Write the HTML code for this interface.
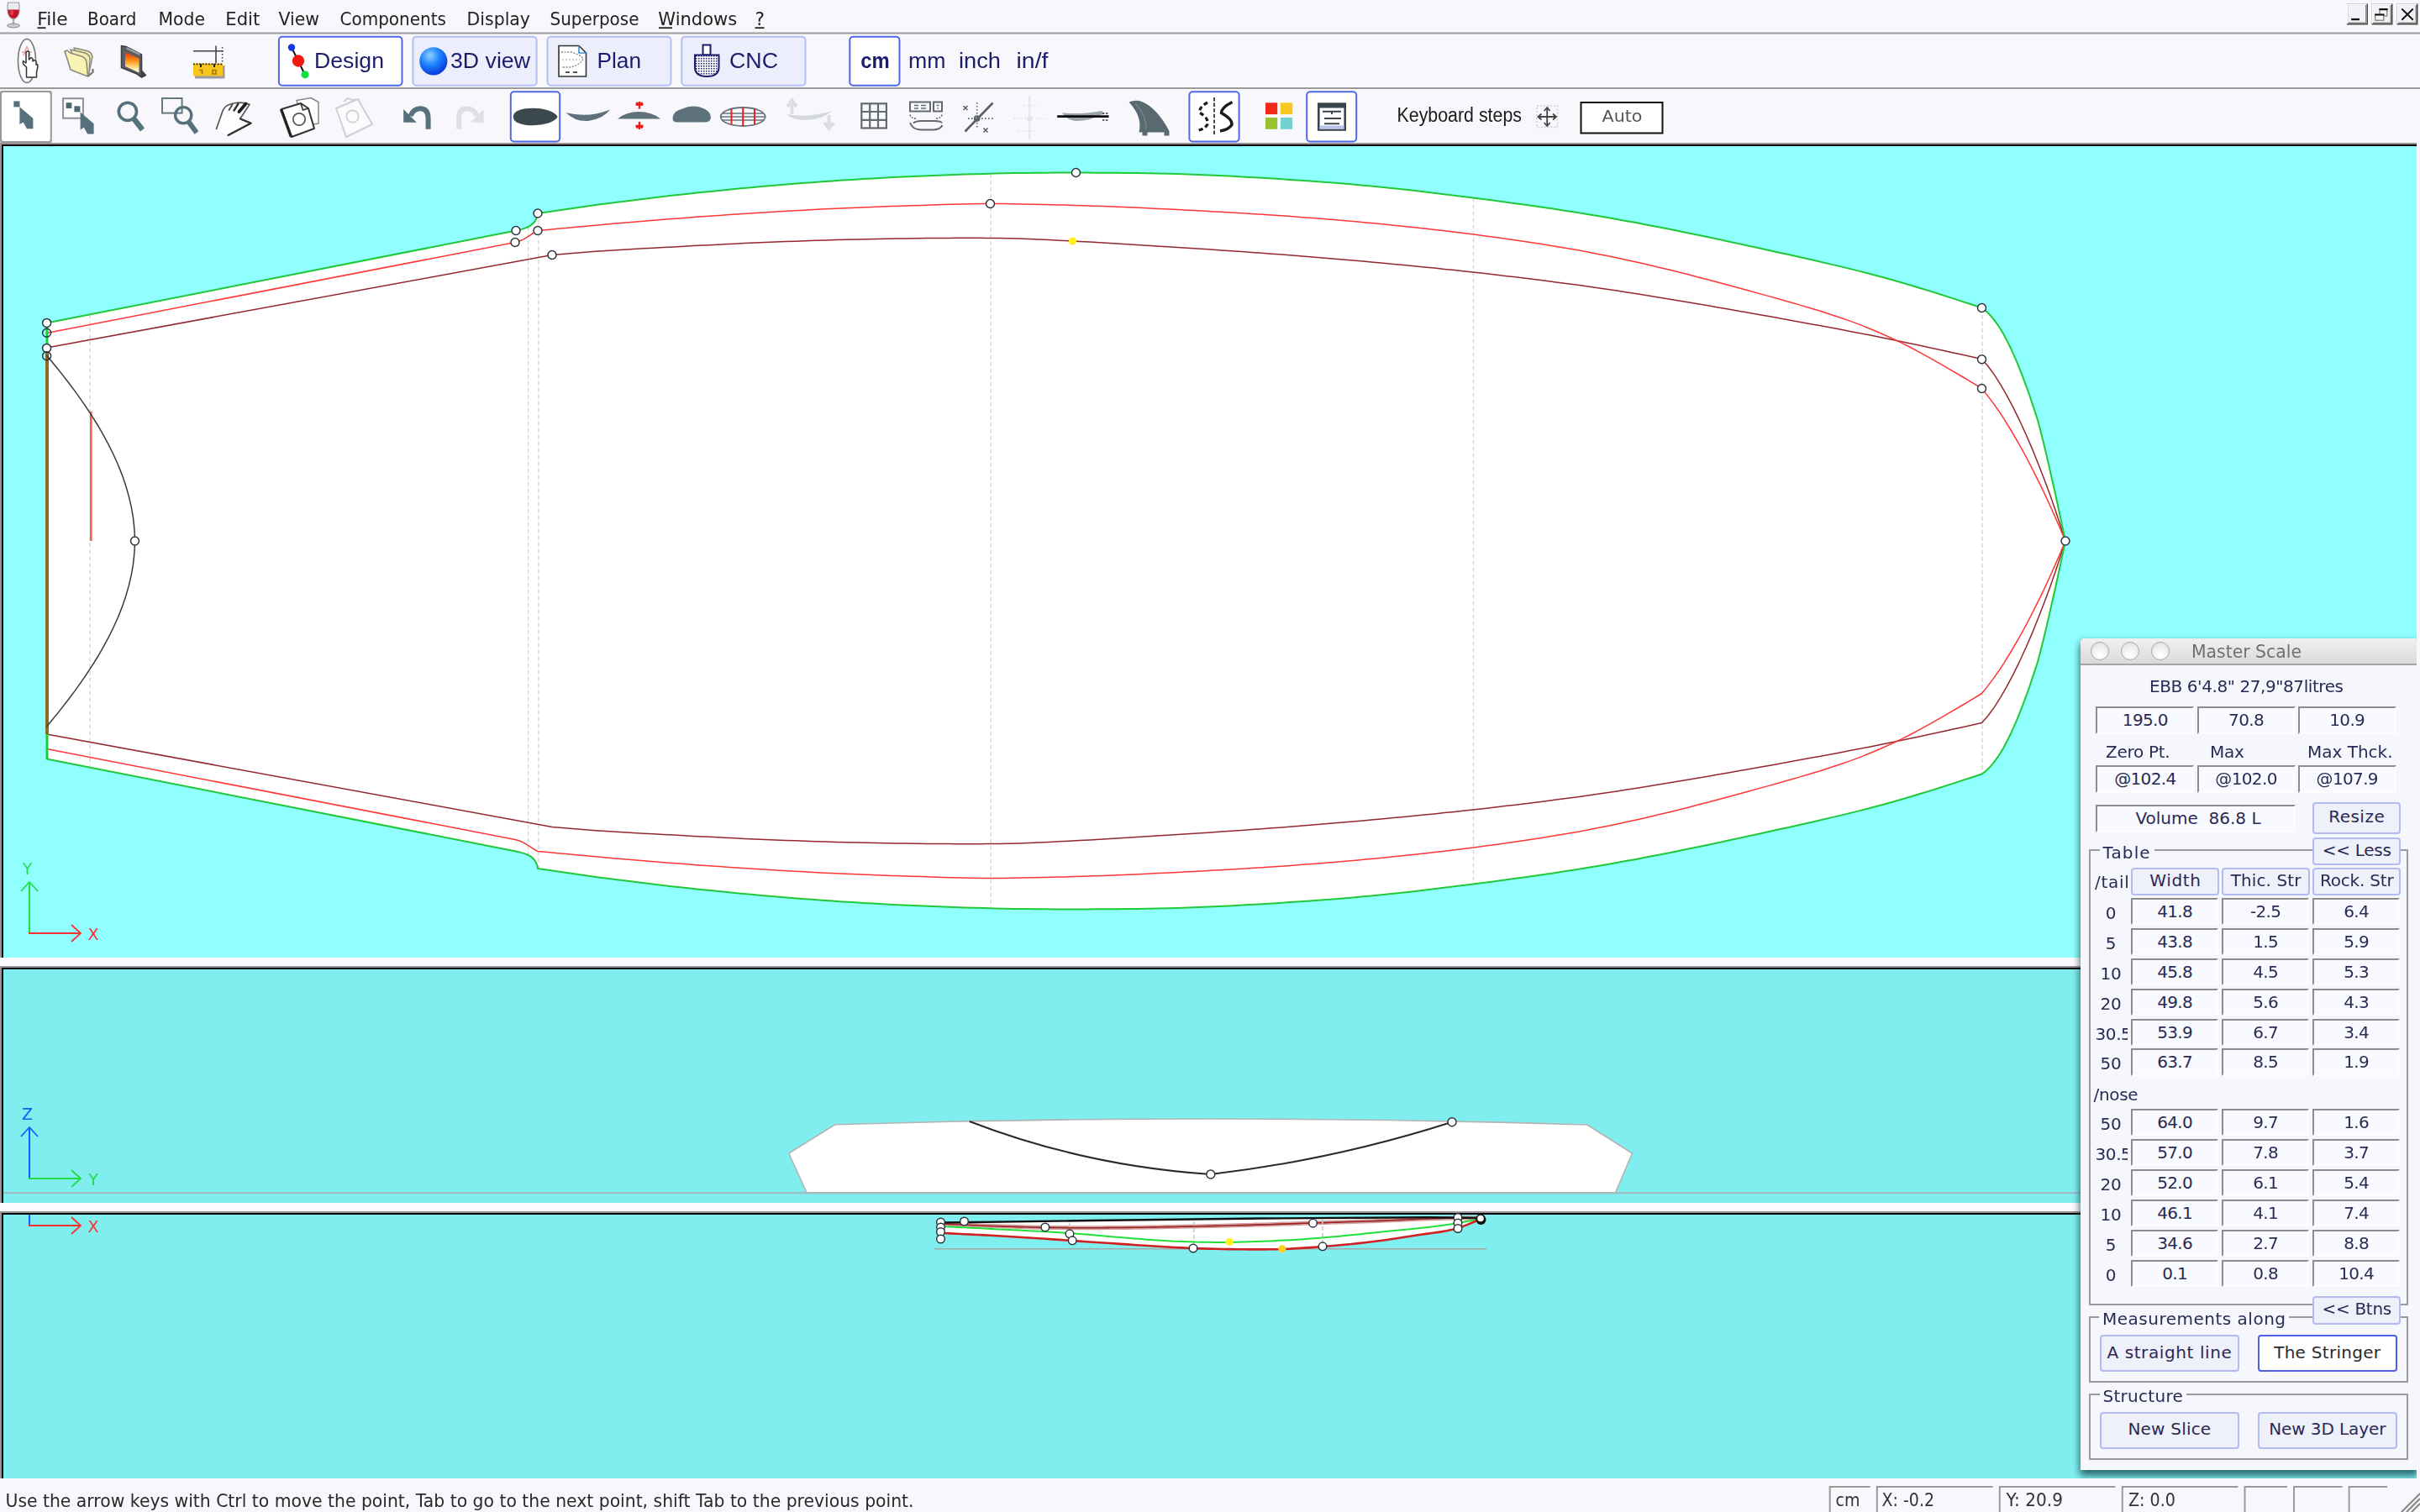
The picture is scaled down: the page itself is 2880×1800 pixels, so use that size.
<!DOCTYPE html>
<html><head><meta charset="utf-8"><title>Board design</title>
<style>
html,body{margin:0;padding:0;}
body{width:2880px;height:1800px;overflow:hidden;background:#F8F8FC;position:relative;font-family:"DejaVu Sans","Liberation Sans",sans-serif;color:#1c1c1c;}
#msclip{position:absolute;left:0;top:172px;width:2876px;height:1588px;overflow:hidden;}
#ms{position:absolute;left:0;top:-172px;font-size:20px;color:#2A2A54;letter-spacing:-0.3px;}
#ms div{position:absolute;white-space:nowrap;box-sizing:border-box;}
#ms .win{background:#F6F7FD;border-radius:5px 5px 0 0;box-shadow:0 7px 9px 0 rgba(0,45,55,0.55),-1px 3px 9px 1px rgba(0,45,55,0.30);}
#ms .tbar{border-radius:5px 5px 0 0;background:linear-gradient(#F0F0F0,#DADADA);border-bottom:2px solid #A6A6A6;height:32px !important;}
#ms .dot{width:22px;height:22px;border-radius:50%;border:1.6px solid #A9A9A9;background:radial-gradient(circle at 50% 75%,#FFFFFF 0%,#F4F4F4 40%,#DCDCDC 100%);}
#ms .lab{line-height:30px;height:30px;}
#ms .fld{background:#F9FAFF;border-top:2px solid #8C8C8C;border-left:2px solid #8C8C8C;border-right:2px solid #FDFDFF;border-bottom:2px solid #FDFDFF;text-align:center;}
#ms .fld{letter-spacing:-0.65px;}
#ms .btn{background:#EEF0FA;border:2px solid #B2BCF2;border-radius:4px;text-align:center;}
#ms .btn.sel{background:#FFFFFF;border-color:#4C60E4;color:#2a2a2a;}
#ms .grp{border:2px solid #9A9A9A;}
#ms .gtt{background:#F6F7FD;}
#ms .rl{text-align:center;overflow:hidden;}
#cv,#chrome,#msclip{filter:blur(0.7px);}

</style></head>
<body>
<svg id="cv" width="2880" height="1800" viewBox="0 0 2880 1800" style="position:absolute;left:0;top:0">
<rect x="0" y="170" width="2876" height="1590" fill="#999596"/>
<rect x="2" y="172" width="2874" height="968" fill="#00060C"/>
<rect x="4" y="174" width="2872" height="966" fill="#90FFFF"/>
<rect x="0" y="1140" width="2878" height="10" fill="#FDFBFF"/>
<rect x="2" y="1152" width="2874" height="280" fill="#00060C"/>
<rect x="4" y="1154" width="2872" height="278" fill="#80EEEE"/>
<rect x="0" y="1432" width="2878" height="10" fill="#FDFBFF"/>
<rect x="2" y="1444" width="2874" height="316" fill="#00060C"/>
<rect x="4" y="1446" width="2872" height="314" fill="#80EEEE"/>
<polygon points="55.5,384.5 614.0,274.5 618.1,273.6 621.9,272.6 625.4,271.4 628.6,270.0 631.5,268.4 634.0,266.4 636.1,264.0 637.9,261.2 639.2,257.9 640.0,254.0 652.1,252.2 664.2,250.4 676.3,248.7 688.3,247.0 700.4,245.3 712.5,243.6 724.6,242.0 736.7,240.5 748.8,238.9 760.8,237.4 772.9,236.0 785.0,234.5 797.1,233.1 809.2,231.8 821.3,230.4 833.4,229.1 845.4,227.9 857.5,226.7 869.6,225.5 881.7,224.3 893.8,223.2 905.9,222.1 918.0,221.0 930.0,220.0 942.1,219.0 954.2,218.1 966.3,217.2 978.4,216.3 990.5,215.4 1002.5,214.6 1014.6,213.9 1026.7,213.1 1038.8,212.4 1050.9,211.7 1063.0,211.1 1075.1,210.5 1087.1,209.9 1099.2,209.4 1111.3,208.9 1123.4,208.4 1135.5,208.0 1147.6,207.6 1159.7,207.2 1171.7,206.9 1183.8,206.6 1195.9,206.3 1208.0,206.1 1220.1,205.9 1232.2,205.8 1244.2,205.7 1256.3,205.6 1268.4,205.5 1280.5,205.5 1292.6,205.6 1304.7,205.7 1316.8,205.7 1328.9,205.8 1341.1,206.0 1353.2,206.1 1365.3,206.3 1377.4,206.5 1389.5,206.7 1401.6,207.0 1413.7,207.4 1425.8,207.9 1438.0,208.4 1450.1,208.9 1462.2,209.5 1474.3,210.2 1486.4,210.9 1498.5,211.6 1510.6,212.3 1522.7,213.1 1534.9,213.9 1547.0,214.7 1559.1,215.5 1571.2,216.4 1583.3,217.3 1595.4,218.3 1607.5,219.3 1619.6,220.4 1631.8,221.5 1643.9,222.7 1656.0,224.0 1668.1,225.3 1680.2,226.6 1692.3,228.0 1704.4,229.5 1716.5,230.9 1728.7,232.4 1740.8,233.9 1752.9,235.5 1765.0,237.1 1777.1,238.6 1789.2,240.3 1801.3,241.9 1813.4,243.6 1825.6,245.3 1837.7,247.0 1849.8,248.8 1861.9,250.7 1874.0,252.6 1886.1,254.5 1898.2,256.5 1910.3,258.6 1922.5,260.7 1934.6,262.9 1946.7,265.1 1958.8,267.4 1970.9,269.7 1983.0,272.1 1995.1,274.5 2007.2,277.0 2019.4,279.5 2031.5,282.0 2043.6,284.6 2055.7,287.2 2067.8,289.8 2079.9,292.4 2092.0,295.1 2104.1,297.7 2116.3,300.4 2128.4,303.1 2140.5,305.7 2152.6,308.5 2164.7,311.2 2176.8,314.1 2188.9,316.9 2201.0,319.9 2213.2,322.9 2225.3,326.0 2237.4,329.2 2249.5,332.5 2261.6,336.0 2273.7,339.5 2285.8,343.2 2297.9,346.9 2310.1,350.7 2322.2,354.6 2334.3,358.6 2346.4,362.5 2358.5,366.5 2362.0,369.1 2365.5,372.2 2369.1,375.9 2372.8,380.3 2376.5,385.3 2380.3,391.0 2384.2,397.6 2388.2,404.9 2392.3,413.2 2396.5,422.4 2400.9,432.6 2405.4,443.8 2410.1,456.1 2414.9,469.5 2419.8,484.1 2425.0,500.0 2427.9,510.9 2431.2,524.0 2434.8,538.8 2438.5,554.7 2442.2,571.2 2446.0,587.8 2449.5,604.0 2452.7,619.0 2455.6,632.6 2458.0,644.0 2458.0,644.0 2455.6,655.4 2452.7,669.0 2449.5,684.0 2446.0,700.2 2442.2,716.8 2438.5,733.3 2434.8,749.2 2431.2,764.0 2427.9,777.1 2425.0,788.0 2419.8,803.9 2414.9,818.5 2410.1,831.9 2405.4,844.2 2400.9,855.4 2396.5,865.6 2392.3,874.8 2388.2,883.1 2384.2,890.4 2380.3,897.0 2376.5,902.7 2372.8,907.7 2369.1,912.1 2365.5,915.8 2362.0,918.9 2358.5,921.5 2346.4,925.5 2334.3,929.4 2322.2,933.4 2310.1,937.3 2297.9,941.1 2285.8,944.8 2273.7,948.5 2261.6,952.0 2249.5,955.5 2237.4,958.8 2225.3,962.0 2213.2,965.1 2201.0,968.1 2188.9,971.1 2176.8,973.9 2164.7,976.8 2152.6,979.5 2140.5,982.3 2128.4,984.9 2116.3,987.6 2104.1,990.3 2092.0,992.9 2079.9,995.6 2067.8,998.2 2055.7,1000.8 2043.6,1003.4 2031.5,1006.0 2019.4,1008.5 2007.2,1011.0 1995.1,1013.5 1983.0,1015.9 1970.9,1018.3 1958.8,1020.6 1946.7,1022.9 1934.6,1025.1 1922.5,1027.3 1910.3,1029.4 1898.2,1031.5 1886.1,1033.5 1874.0,1035.4 1861.9,1037.3 1849.8,1039.2 1837.7,1041.0 1825.6,1042.7 1813.4,1044.4 1801.3,1046.1 1789.2,1047.7 1777.1,1049.4 1765.0,1050.9 1752.9,1052.5 1740.8,1054.1 1728.7,1055.6 1716.5,1057.1 1704.4,1058.5 1692.3,1060.0 1680.2,1061.4 1668.1,1062.7 1656.0,1064.0 1643.9,1065.3 1631.8,1066.5 1619.6,1067.6 1607.5,1068.7 1595.4,1069.7 1583.3,1070.7 1571.2,1071.6 1559.1,1072.5 1547.0,1073.3 1534.9,1074.1 1522.7,1074.9 1510.6,1075.7 1498.5,1076.4 1486.4,1077.1 1474.3,1077.8 1462.2,1078.5 1450.1,1079.1 1438.0,1079.6 1425.8,1080.1 1413.7,1080.6 1401.6,1081.0 1389.5,1081.3 1377.4,1081.5 1365.3,1081.7 1353.2,1081.9 1341.1,1082.0 1328.9,1082.2 1316.8,1082.3 1304.7,1082.3 1292.6,1082.4 1280.5,1082.5 1268.4,1082.5 1256.3,1082.4 1244.2,1082.3 1232.2,1082.2 1220.1,1082.1 1208.0,1081.9 1195.9,1081.7 1183.8,1081.4 1171.7,1081.1 1159.7,1080.8 1147.6,1080.4 1135.5,1080.0 1123.4,1079.6 1111.3,1079.1 1099.2,1078.6 1087.1,1078.1 1075.1,1077.5 1063.0,1076.9 1050.9,1076.3 1038.8,1075.6 1026.7,1074.9 1014.6,1074.1 1002.5,1073.4 990.5,1072.6 978.4,1071.7 966.3,1070.8 954.2,1069.9 942.1,1069.0 930.0,1068.0 918.0,1067.0 905.9,1065.9 893.8,1064.8 881.7,1063.7 869.6,1062.5 857.5,1061.3 845.4,1060.1 833.4,1058.9 821.3,1057.6 809.2,1056.2 797.1,1054.9 785.0,1053.5 772.9,1052.0 760.8,1050.6 748.8,1049.1 736.7,1047.5 724.6,1046.0 712.5,1044.4 700.4,1042.7 688.3,1041.0 676.3,1039.3 664.2,1037.6 652.1,1035.8 640.0,1034.0 639.2,1030.1 637.9,1026.8 636.1,1024.0 634.0,1021.6 631.5,1019.6 628.6,1018.0 625.4,1016.6 621.9,1015.4 618.1,1014.4 614.0,1013.5 55.5,903.5" fill="#FFFFFF"/>
<line x1="107" y1="374.4" x2="107" y2="913.6" stroke="#D6D6D6" stroke-width="1.4" stroke-dasharray="5 3"/>
<line x1="628.5" y1="270.1" x2="628.5" y2="1017.9" stroke="#D6D6D6" stroke-width="1.4" stroke-dasharray="5 3"/>
<line x1="641" y1="253.8" x2="641" y2="1034.2" stroke="#D6D6D6" stroke-width="1.4" stroke-dasharray="5 3"/>
<line x1="1179" y1="206.7" x2="1179" y2="1081.3" stroke="#D6D6D6" stroke-width="1.4" stroke-dasharray="5 3"/>
<line x1="1753.5" y1="235.6" x2="1753.5" y2="1052.4" stroke="#D6D6D6" stroke-width="1.4" stroke-dasharray="5 3"/>
<line x1="2359" y1="366.9" x2="2359" y2="921.1" stroke="#D6D6D6" stroke-width="1.4" stroke-dasharray="5 3"/>
<polyline points="55.5,414.0 657.0,303.5 669.1,302.5 681.1,301.5 693.2,300.5 705.3,299.6 717.3,298.8 729.4,298.0 741.5,297.2 753.5,296.5 765.6,295.8 777.7,295.2 789.7,294.5 801.8,293.9 813.9,293.3 825.9,292.6 838.0,292.0 850.1,291.4 862.1,290.8 874.2,290.2 886.3,289.6 898.3,289.1 910.4,288.6 922.5,288.1 934.5,287.6 946.6,287.2 958.7,286.7 970.8,286.3 982.8,286.0 994.9,285.6 1007.0,285.3 1019.0,285.0 1031.1,284.7 1043.2,284.5 1055.2,284.3 1067.3,284.1 1079.4,283.9 1091.4,283.7 1103.5,283.6 1115.6,283.4 1127.6,283.4 1139.7,283.3 1151.8,283.3 1163.8,283.3 1175.9,283.4 1188.0,283.5 1200.0,283.7 1212.1,284.1 1224.2,284.5 1236.2,285.0 1248.3,285.5 1260.4,286.2 1272.4,286.8 1284.5,287.5 1296.6,288.1 1308.6,288.8 1320.7,289.5 1332.8,290.2 1344.8,290.9 1356.9,291.7 1369.0,292.4 1381.0,293.2 1393.1,293.9 1405.2,294.7 1417.2,295.5 1429.3,296.3 1441.4,297.1 1453.4,297.9 1465.5,298.7 1477.6,299.6 1489.6,300.5 1501.7,301.3 1513.8,302.2 1525.9,303.1 1537.9,304.1 1550.0,305.0 1562.1,306.0 1574.1,307.0 1586.2,308.0 1598.3,309.0 1610.3,310.0 1622.4,311.1 1634.5,312.2 1646.5,313.3 1658.6,314.4 1670.7,315.5 1682.7,316.7 1694.8,317.9 1706.9,319.1 1718.9,320.4 1731.0,321.6 1743.1,322.9 1755.1,324.2 1767.2,325.6 1779.3,327.0 1791.3,328.4 1803.4,329.8 1815.5,331.3 1827.5,332.8 1839.6,334.3 1851.7,335.9 1863.7,337.5 1875.8,339.1 1887.9,340.8 1899.9,342.5 1912.0,344.3 1924.1,346.1 1936.1,347.9 1948.2,349.8 1960.3,351.7 1972.3,353.7 1984.4,355.7 1996.5,357.7 2008.5,359.7 2020.6,361.7 2032.7,363.8 2044.7,365.9 2056.8,368.0 2068.9,370.2 2081.0,372.3 2093.0,374.5 2105.1,376.6 2117.2,378.8 2129.2,381.0 2141.3,383.2 2153.4,385.4 2165.4,387.6 2177.5,389.8 2189.6,392.1 2201.6,394.4 2213.7,396.7 2225.8,399.1 2237.8,401.5 2249.9,404.0 2262.0,406.5 2274.0,409.0 2286.1,411.6 2298.2,414.2 2310.2,416.8 2322.3,419.5 2334.4,422.1 2346.4,424.8 2358.5,427.5 2365.8,435.8 2373.2,445.9 2380.7,457.7 2388.3,470.8 2395.9,485.2 2403.5,500.7 2411.1,517.2 2418.5,534.4 2425.7,552.2 2432.8,570.4 2439.6,588.8 2446.1,607.4 2452.2,625.8 2458.0,644.0" fill="none" stroke="#93282E" stroke-width="1.5" stroke-linejoin="round"/>
<polyline points="55.5,874.0 657.0,984.5 669.1,985.5 681.1,986.5 693.2,987.5 705.3,988.4 717.3,989.2 729.4,990.0 741.5,990.8 753.5,991.5 765.6,992.2 777.7,992.8 789.7,993.5 801.8,994.1 813.9,994.7 825.9,995.4 838.0,996.0 850.1,996.6 862.1,997.2 874.2,997.8 886.3,998.4 898.3,998.9 910.4,999.4 922.5,999.9 934.5,1000.4 946.6,1000.8 958.7,1001.3 970.8,1001.7 982.8,1002.0 994.9,1002.4 1007.0,1002.7 1019.0,1003.0 1031.1,1003.3 1043.2,1003.5 1055.2,1003.7 1067.3,1003.9 1079.4,1004.1 1091.4,1004.3 1103.5,1004.4 1115.6,1004.6 1127.6,1004.6 1139.7,1004.7 1151.8,1004.7 1163.8,1004.7 1175.9,1004.6 1188.0,1004.5 1200.0,1004.3 1212.1,1003.9 1224.2,1003.5 1236.2,1003.0 1248.3,1002.5 1260.4,1001.8 1272.4,1001.2 1284.5,1000.5 1296.6,999.9 1308.6,999.2 1320.7,998.5 1332.8,997.8 1344.8,997.1 1356.9,996.3 1369.0,995.6 1381.0,994.8 1393.1,994.1 1405.2,993.3 1417.2,992.5 1429.3,991.7 1441.4,990.9 1453.4,990.1 1465.5,989.3 1477.6,988.4 1489.6,987.5 1501.7,986.7 1513.8,985.8 1525.9,984.9 1537.9,983.9 1550.0,983.0 1562.1,982.0 1574.1,981.0 1586.2,980.0 1598.3,979.0 1610.3,978.0 1622.4,976.9 1634.5,975.8 1646.5,974.7 1658.6,973.6 1670.7,972.5 1682.7,971.3 1694.8,970.1 1706.9,968.9 1718.9,967.6 1731.0,966.4 1743.1,965.1 1755.1,963.8 1767.2,962.4 1779.3,961.0 1791.3,959.6 1803.4,958.2 1815.5,956.7 1827.5,955.2 1839.6,953.7 1851.7,952.1 1863.7,950.5 1875.8,948.9 1887.9,947.2 1899.9,945.5 1912.0,943.7 1924.1,941.9 1936.1,940.1 1948.2,938.2 1960.3,936.3 1972.3,934.3 1984.4,932.3 1996.5,930.3 2008.5,928.3 2020.6,926.3 2032.7,924.2 2044.7,922.1 2056.8,920.0 2068.9,917.8 2081.0,915.7 2093.0,913.5 2105.1,911.4 2117.2,909.2 2129.2,907.0 2141.3,904.8 2153.4,902.6 2165.4,900.4 2177.5,898.2 2189.6,895.9 2201.6,893.6 2213.7,891.3 2225.8,888.9 2237.8,886.5 2249.9,884.0 2262.0,881.5 2274.0,879.0 2286.1,876.4 2298.2,873.8 2310.2,871.2 2322.3,868.5 2334.4,865.9 2346.4,863.2 2358.5,860.5 2365.8,852.2 2373.2,842.1 2380.7,830.3 2388.3,817.2 2395.9,802.8 2403.5,787.3 2411.1,770.8 2418.5,753.6 2425.7,735.8 2432.8,717.6 2439.6,699.2 2446.1,680.6 2452.2,662.2 2458.0,644.0" fill="none" stroke="#93282E" stroke-width="1.5" stroke-linejoin="round"/>
<polyline points="55.5,396.5 613.0,288.5 617.3,287.3 621.2,285.8 624.7,283.9 628.0,281.9 631.1,279.8 634.1,277.8 637.0,276.0 640.0,274.5 652.0,273.4 664.0,272.3 676.1,271.2 688.1,270.1 700.1,269.0 712.1,267.9 724.1,266.8 736.1,265.8 748.2,264.8 760.2,263.7 772.2,262.7 784.2,261.8 796.2,260.8 808.2,259.9 820.3,259.0 832.3,258.1 844.3,257.2 856.3,256.4 868.3,255.6 880.3,254.8 892.4,254.0 904.4,253.2 916.4,252.5 928.4,251.8 940.4,251.1 952.5,250.4 964.5,249.7 976.5,249.1 988.5,248.5 1000.5,248.0 1012.5,247.5 1024.6,247.0 1036.6,246.5 1048.6,246.1 1060.6,245.6 1072.6,245.2 1084.6,244.8 1096.7,244.4 1108.7,244.0 1120.7,243.6 1132.7,243.3 1144.7,242.9 1156.8,242.7 1168.8,242.5 1180.8,242.5 1192.8,242.6 1204.8,242.7 1216.8,242.9 1228.9,243.2 1240.9,243.4 1252.9,243.7 1264.9,244.0 1276.9,244.4 1288.9,244.8 1301.0,245.2 1313.0,245.6 1325.0,246.1 1337.0,246.6 1349.0,247.1 1361.0,247.6 1373.1,248.2 1385.1,248.8 1397.1,249.3 1409.1,250.0 1421.1,250.6 1433.2,251.2 1445.2,251.9 1457.2,252.6 1469.2,253.3 1481.2,254.0 1493.2,254.7 1505.3,255.5 1517.3,256.3 1529.3,257.1 1541.3,258.0 1553.3,258.9 1565.3,259.8 1577.4,260.7 1589.4,261.7 1601.4,262.7 1613.4,263.8 1625.4,264.9 1637.5,266.0 1649.5,267.2 1661.5,268.4 1673.5,269.7 1685.5,271.0 1697.5,272.3 1709.6,273.7 1721.6,275.1 1733.6,276.6 1745.6,278.1 1757.6,279.6 1769.6,281.2 1781.7,282.8 1793.7,284.4 1805.7,286.2 1817.7,287.9 1829.7,289.8 1841.7,291.7 1853.8,293.7 1865.8,295.7 1877.8,297.8 1889.8,300.1 1901.8,302.4 1913.9,304.8 1925.9,307.3 1937.9,309.9 1949.9,312.6 1961.9,315.3 1973.9,318.2 1986.0,321.1 1998.0,324.0 2010.0,327.1 2022.0,330.2 2034.0,333.3 2046.0,336.5 2058.1,339.7 2070.1,343.0 2082.1,346.3 2094.1,349.6 2106.1,352.9 2118.2,356.3 2130.2,359.7 2142.2,363.1 2154.2,366.7 2166.2,370.3 2178.2,374.2 2190.3,378.2 2202.3,382.4 2214.3,386.9 2226.3,391.7 2238.3,396.7 2250.3,402.2 2262.4,407.9 2274.4,414.0 2286.4,420.4 2298.4,427.1 2310.4,433.9 2322.4,440.9 2334.5,448.0 2346.5,455.2 2358.5,462.5 2364.9,470.4 2371.5,479.1 2378.3,488.7 2385.2,499.2 2392.2,510.5 2399.3,522.6 2406.6,535.4 2413.9,549.0 2421.2,563.3 2428.6,578.2 2436.0,593.8 2443.3,609.9 2450.7,626.7 2458.0,644.0" fill="none" stroke="#FF3636" stroke-width="1.5" stroke-linejoin="round"/>
<polyline points="55.5,891.5 613.0,999.5 617.3,1000.7 621.2,1002.2 624.7,1004.1 628.0,1006.1 631.1,1008.2 634.1,1010.2 637.0,1012.0 640.0,1013.5 652.0,1014.6 664.0,1015.7 676.1,1016.8 688.1,1017.9 700.1,1019.0 712.1,1020.1 724.1,1021.2 736.1,1022.2 748.2,1023.2 760.2,1024.3 772.2,1025.3 784.2,1026.2 796.2,1027.2 808.2,1028.1 820.3,1029.0 832.3,1029.9 844.3,1030.8 856.3,1031.6 868.3,1032.4 880.3,1033.2 892.4,1034.0 904.4,1034.8 916.4,1035.5 928.4,1036.2 940.4,1036.9 952.5,1037.6 964.5,1038.3 976.5,1038.9 988.5,1039.5 1000.5,1040.0 1012.5,1040.5 1024.6,1041.0 1036.6,1041.5 1048.6,1041.9 1060.6,1042.4 1072.6,1042.8 1084.6,1043.2 1096.7,1043.6 1108.7,1044.0 1120.7,1044.4 1132.7,1044.7 1144.7,1045.1 1156.8,1045.3 1168.8,1045.5 1180.8,1045.5 1192.8,1045.4 1204.8,1045.3 1216.8,1045.1 1228.9,1044.8 1240.9,1044.6 1252.9,1044.3 1264.9,1044.0 1276.9,1043.6 1288.9,1043.2 1301.0,1042.8 1313.0,1042.4 1325.0,1041.9 1337.0,1041.4 1349.0,1040.9 1361.0,1040.4 1373.1,1039.8 1385.1,1039.2 1397.1,1038.7 1409.1,1038.0 1421.1,1037.4 1433.2,1036.8 1445.2,1036.1 1457.2,1035.4 1469.2,1034.7 1481.2,1034.0 1493.2,1033.3 1505.3,1032.5 1517.3,1031.7 1529.3,1030.9 1541.3,1030.0 1553.3,1029.1 1565.3,1028.2 1577.4,1027.3 1589.4,1026.3 1601.4,1025.3 1613.4,1024.2 1625.4,1023.1 1637.5,1022.0 1649.5,1020.8 1661.5,1019.6 1673.5,1018.3 1685.5,1017.0 1697.5,1015.7 1709.6,1014.3 1721.6,1012.9 1733.6,1011.4 1745.6,1009.9 1757.6,1008.4 1769.6,1006.8 1781.7,1005.2 1793.7,1003.6 1805.7,1001.8 1817.7,1000.1 1829.7,998.2 1841.7,996.3 1853.8,994.3 1865.8,992.3 1877.8,990.2 1889.8,987.9 1901.8,985.6 1913.9,983.2 1925.9,980.7 1937.9,978.1 1949.9,975.4 1961.9,972.7 1973.9,969.8 1986.0,966.9 1998.0,964.0 2010.0,960.9 2022.0,957.8 2034.0,954.7 2046.0,951.5 2058.1,948.3 2070.1,945.0 2082.1,941.7 2094.1,938.4 2106.1,935.1 2118.2,931.7 2130.2,928.3 2142.2,924.9 2154.2,921.3 2166.2,917.7 2178.2,913.8 2190.3,909.8 2202.3,905.6 2214.3,901.1 2226.3,896.3 2238.3,891.3 2250.3,885.8 2262.4,880.1 2274.4,874.0 2286.4,867.6 2298.4,860.9 2310.4,854.1 2322.4,847.1 2334.5,840.0 2346.5,832.8 2358.5,825.5 2364.9,817.6 2371.5,808.9 2378.3,799.3 2385.2,788.8 2392.2,777.5 2399.3,765.4 2406.6,752.6 2413.9,739.0 2421.2,724.7 2428.6,709.8 2436.0,694.2 2443.3,678.1 2450.7,661.3 2458.0,644.0" fill="none" stroke="#FF3636" stroke-width="1.5" stroke-linejoin="round"/>
<polyline points="55.5,384.5 614.0,274.5 618.1,273.6 621.9,272.6 625.4,271.4 628.6,270.0 631.5,268.4 634.0,266.4 636.1,264.0 637.9,261.2 639.2,257.9 640.0,254.0 652.1,252.2 664.2,250.4 676.3,248.7 688.3,247.0 700.4,245.3 712.5,243.6 724.6,242.0 736.7,240.5 748.8,238.9 760.8,237.4 772.9,236.0 785.0,234.5 797.1,233.1 809.2,231.8 821.3,230.4 833.4,229.1 845.4,227.9 857.5,226.7 869.6,225.5 881.7,224.3 893.8,223.2 905.9,222.1 918.0,221.0 930.0,220.0 942.1,219.0 954.2,218.1 966.3,217.2 978.4,216.3 990.5,215.4 1002.5,214.6 1014.6,213.9 1026.7,213.1 1038.8,212.4 1050.9,211.7 1063.0,211.1 1075.1,210.5 1087.1,209.9 1099.2,209.4 1111.3,208.9 1123.4,208.4 1135.5,208.0 1147.6,207.6 1159.7,207.2 1171.7,206.9 1183.8,206.6 1195.9,206.3 1208.0,206.1 1220.1,205.9 1232.2,205.8 1244.2,205.7 1256.3,205.6 1268.4,205.5 1280.5,205.5 1292.6,205.6 1304.7,205.7 1316.8,205.7 1328.9,205.8 1341.1,206.0 1353.2,206.1 1365.3,206.3 1377.4,206.5 1389.5,206.7 1401.6,207.0 1413.7,207.4 1425.8,207.9 1438.0,208.4 1450.1,208.9 1462.2,209.5 1474.3,210.2 1486.4,210.9 1498.5,211.6 1510.6,212.3 1522.7,213.1 1534.9,213.9 1547.0,214.7 1559.1,215.5 1571.2,216.4 1583.3,217.3 1595.4,218.3 1607.5,219.3 1619.6,220.4 1631.8,221.5 1643.9,222.7 1656.0,224.0 1668.1,225.3 1680.2,226.6 1692.3,228.0 1704.4,229.5 1716.5,230.9 1728.7,232.4 1740.8,233.9 1752.9,235.5 1765.0,237.1 1777.1,238.6 1789.2,240.3 1801.3,241.9 1813.4,243.6 1825.6,245.3 1837.7,247.0 1849.8,248.8 1861.9,250.7 1874.0,252.6 1886.1,254.5 1898.2,256.5 1910.3,258.6 1922.5,260.7 1934.6,262.9 1946.7,265.1 1958.8,267.4 1970.9,269.7 1983.0,272.1 1995.1,274.5 2007.2,277.0 2019.4,279.5 2031.5,282.0 2043.6,284.6 2055.7,287.2 2067.8,289.8 2079.9,292.4 2092.0,295.1 2104.1,297.7 2116.3,300.4 2128.4,303.1 2140.5,305.7 2152.6,308.5 2164.7,311.2 2176.8,314.1 2188.9,316.9 2201.0,319.9 2213.2,322.9 2225.3,326.0 2237.4,329.2 2249.5,332.5 2261.6,336.0 2273.7,339.5 2285.8,343.2 2297.9,346.9 2310.1,350.7 2322.2,354.6 2334.3,358.6 2346.4,362.5 2358.5,366.5 2362.0,369.1 2365.5,372.2 2369.1,375.9 2372.8,380.3 2376.5,385.3 2380.3,391.0 2384.2,397.6 2388.2,404.9 2392.3,413.2 2396.5,422.4 2400.9,432.6 2405.4,443.8 2410.1,456.1 2414.9,469.5 2419.8,484.1 2425.0,500.0 2427.9,510.9 2431.2,524.0 2434.8,538.8 2438.5,554.7 2442.2,571.2 2446.0,587.8 2449.5,604.0 2452.7,619.0 2455.6,632.6 2458.0,644.0" fill="none" stroke="#1FC93A" stroke-width="2" stroke-linejoin="round"/>
<polyline points="55.5,903.5 614.0,1013.5 618.1,1014.4 621.9,1015.4 625.4,1016.6 628.6,1018.0 631.5,1019.6 634.0,1021.6 636.1,1024.0 637.9,1026.8 639.2,1030.1 640.0,1034.0 652.1,1035.8 664.2,1037.6 676.3,1039.3 688.3,1041.0 700.4,1042.7 712.5,1044.4 724.6,1046.0 736.7,1047.5 748.8,1049.1 760.8,1050.6 772.9,1052.0 785.0,1053.5 797.1,1054.9 809.2,1056.2 821.3,1057.6 833.4,1058.9 845.4,1060.1 857.5,1061.3 869.6,1062.5 881.7,1063.7 893.8,1064.8 905.9,1065.9 918.0,1067.0 930.0,1068.0 942.1,1069.0 954.2,1069.9 966.3,1070.8 978.4,1071.7 990.5,1072.6 1002.5,1073.4 1014.6,1074.1 1026.7,1074.9 1038.8,1075.6 1050.9,1076.3 1063.0,1076.9 1075.1,1077.5 1087.1,1078.1 1099.2,1078.6 1111.3,1079.1 1123.4,1079.6 1135.5,1080.0 1147.6,1080.4 1159.7,1080.8 1171.7,1081.1 1183.8,1081.4 1195.9,1081.7 1208.0,1081.9 1220.1,1082.1 1232.2,1082.2 1244.2,1082.3 1256.3,1082.4 1268.4,1082.5 1280.5,1082.5 1292.6,1082.4 1304.7,1082.3 1316.8,1082.3 1328.9,1082.2 1341.1,1082.0 1353.2,1081.9 1365.3,1081.7 1377.4,1081.5 1389.5,1081.3 1401.6,1081.0 1413.7,1080.6 1425.8,1080.1 1438.0,1079.6 1450.1,1079.1 1462.2,1078.5 1474.3,1077.8 1486.4,1077.1 1498.5,1076.4 1510.6,1075.7 1522.7,1074.9 1534.9,1074.1 1547.0,1073.3 1559.1,1072.5 1571.2,1071.6 1583.3,1070.7 1595.4,1069.7 1607.5,1068.7 1619.6,1067.6 1631.8,1066.5 1643.9,1065.3 1656.0,1064.0 1668.1,1062.7 1680.2,1061.4 1692.3,1060.0 1704.4,1058.5 1716.5,1057.1 1728.7,1055.6 1740.8,1054.1 1752.9,1052.5 1765.0,1050.9 1777.1,1049.4 1789.2,1047.7 1801.3,1046.1 1813.4,1044.4 1825.6,1042.7 1837.7,1041.0 1849.8,1039.2 1861.9,1037.3 1874.0,1035.4 1886.1,1033.5 1898.2,1031.5 1910.3,1029.4 1922.5,1027.3 1934.6,1025.1 1946.7,1022.9 1958.8,1020.6 1970.9,1018.3 1983.0,1015.9 1995.1,1013.5 2007.2,1011.0 2019.4,1008.5 2031.5,1006.0 2043.6,1003.4 2055.7,1000.8 2067.8,998.2 2079.9,995.6 2092.0,992.9 2104.1,990.3 2116.3,987.6 2128.4,984.9 2140.5,982.3 2152.6,979.5 2164.7,976.8 2176.8,973.9 2188.9,971.1 2201.0,968.1 2213.2,965.1 2225.3,962.0 2237.4,958.8 2249.5,955.5 2261.6,952.0 2273.7,948.5 2285.8,944.8 2297.9,941.1 2310.1,937.3 2322.2,933.4 2334.3,929.4 2346.4,925.5 2358.5,921.5 2362.0,918.9 2365.5,915.8 2369.1,912.1 2372.8,907.7 2376.5,902.7 2380.3,897.0 2384.2,890.4 2388.2,883.1 2392.3,874.8 2396.5,865.6 2400.9,855.4 2405.4,844.2 2410.1,831.9 2414.9,818.5 2419.8,803.9 2425.0,788.0 2427.9,777.1 2431.2,764.0 2434.8,749.2 2438.5,733.3 2442.2,716.8 2446.0,700.2 2449.5,684.0 2452.7,669.0 2455.6,655.4 2458.0,644.0" fill="none" stroke="#1FC93A" stroke-width="2" stroke-linejoin="round"/>
<line x1="56" y1="384" x2="56" y2="421" stroke="#1FC93A" stroke-width="3"/>
<line x1="56" y1="872" x2="56" y2="904" stroke="#1FC93A" stroke-width="3"/>
<line x1="56" y1="420" x2="56" y2="874" stroke="#8A6A22" stroke-width="4"/>
<line x1="108.3" y1="490" x2="108.3" y2="644" stroke="#FF5A4A" stroke-width="2.6"/>
<polyline points="55.5,423.0 61.7,430.5 68.2,438.4 74.9,446.9 81.8,455.8 88.8,465.1 95.8,474.9 102.8,485.1 109.7,495.6 116.5,506.5 123.0,517.8 129.2,529.3 135.1,541.2 140.5,553.3 145.4,565.6 149.7,578.2 153.4,591.1 156.4,604.1 158.6,617.2 160.0,630.6 160.5,644.0 160.5,644.0 160.0,657.4 158.6,670.8 156.4,683.9 153.4,696.9 149.7,709.8 145.4,722.4 140.5,734.7 135.1,746.8 129.2,758.7 123.0,770.2 116.5,781.5 109.7,792.4 102.8,802.9 95.8,813.1 88.8,822.9 81.8,832.2 74.9,841.1 68.2,849.6 61.7,857.5 55.5,865.0" fill="none" stroke="#3A3A3A" stroke-width="1.5"/>
<g fill="#FFFFFF" stroke="#2A333C" stroke-width="1.45">
<circle cx="55.6" cy="384.4" r="5.0"/>
<circle cx="55.6" cy="414.4" r="5.0"/>
<circle cx="614" cy="274.5" r="5.0"/>
<circle cx="640" cy="254" r="5.0"/>
<circle cx="640" cy="274.5" r="5.0"/>
<circle cx="613" cy="288.5" r="5.0"/>
<circle cx="657" cy="303.5" r="5.0"/>
<circle cx="1178.5" cy="242.5" r="5.0"/>
<circle cx="1280.5" cy="205.5" r="5.0"/>
<circle cx="2358.5" cy="366.5" r="5.0"/>
<circle cx="2358.5" cy="427.7" r="5.0"/>
<circle cx="2358.5" cy="462.5" r="5.0"/>
<circle cx="2458" cy="644" r="5.0"/>
<circle cx="160.5" cy="644" r="5.0"/>
</g>
<g fill="none" stroke="#2A333C" stroke-width="1.45"><circle cx="55.6" cy="396.3" r="5.0"/><circle cx="55.6" cy="423.7" r="5.0"/></g>
<circle cx="1276.5" cy="287" r="4.6" fill="#FFF01E"/>
<g font-family="'DejaVu Sans','Liberation Sans',sans-serif">
<path d="M35,1111 L35,1050" stroke="#22DD44" stroke-width="2" fill="none"/><path d="M25,1061 L35,1050 L45,1061" stroke="#22DD44" stroke-width="1.8" fill="none"/><text x="32.5" y="1041" text-anchor="middle" font-size="19" fill="#22DD44">Y</text><path d="M34,1111 L96,1111" stroke="#FF3030" stroke-width="2" fill="none"/><path d="M85,1101 L96,1111 L85,1121" stroke="#FF3030" stroke-width="1.8" fill="none"/><text x="111" y="1119" text-anchor="middle" font-size="19" fill="#FF3030">X</text>
<path d="M35,1403 L35,1342" stroke="#1060FF" stroke-width="2" fill="none"/><path d="M25,1353 L35,1342 L45,1353" stroke="#1060FF" stroke-width="1.8" fill="none"/><text x="32.5" y="1333" text-anchor="middle" font-size="19" fill="#1060FF">Z</text><path d="M34,1403 L96,1403" stroke="#22DD44" stroke-width="2" fill="none"/><path d="M85,1393 L96,1403 L85,1413" stroke="#22DD44" stroke-width="1.8" fill="none"/><text x="111" y="1411" text-anchor="middle" font-size="19" fill="#22DD44">Y</text>
<path d="M35,1459 L35,1446" stroke="#1060FF" stroke-width="2" fill="none"/><path d="M34,1459 L96,1459" stroke="#FF3030" stroke-width="2" fill="none"/><path d="M85,1449 L96,1459 L85,1469" stroke="#FF3030" stroke-width="1.8" fill="none"/><text x="111" y="1467" text-anchor="middle" font-size="19" fill="#FF3030">X</text>
</g>
<rect x="4" y="1419" width="2872" height="2.4" fill="#9FBFCB"/>
<path d="M938.8,1373 L993.8,1338.8 Q1440,1325 1888.8,1339 L1942.5,1373 L1922.5,1419.8 L960,1419.8 Z" fill="#FFFFFF" stroke="#B4B4B4" stroke-width="1.6" stroke-linejoin="round"/>
<path d="M1153.8,1335 Q1291,1388 1440.8,1398 Q1587,1381 1728,1335.8" fill="none" stroke="#2A2A2A" stroke-width="2"/>
<g fill="#FFFFFF" stroke="#2A333C" stroke-width="1.45"><circle cx="1440.8" cy="1398" r="5.0"/><circle cx="1728" cy="1335.8" r="5.0"/></g>
<line x1="1112" y1="1486.8" x2="1769" y2="1486.8" stroke="#A8A8A8" stroke-width="1.6"/>
<polygon points="1123.0,1455.5 1300.0,1453.0 1500.0,1450.5 1700.0,1449.3 1762.0,1450.0 1762.0,1451.0 1753.9,1454.7 1745.8,1458.1 1737.7,1461.1 1729.6,1463.5 1721.6,1465.3 1713.5,1466.6 1705.4,1467.8 1697.3,1468.9 1689.2,1470.0 1681.1,1471.3 1673.0,1472.5 1664.9,1473.8 1656.8,1475.0 1648.8,1476.2 1640.7,1477.3 1632.6,1478.3 1624.5,1479.2 1616.4,1480.1 1608.3,1481.0 1600.2,1481.7 1592.1,1482.5 1584.1,1483.2 1576.0,1483.8 1567.9,1484.5 1559.8,1485.1 1551.7,1485.6 1543.6,1486.1 1535.5,1486.6 1527.4,1486.9 1519.3,1487.2 1511.3,1487.3 1503.2,1487.4 1495.1,1487.4 1487.0,1487.4 1478.9,1487.3 1470.8,1487.2 1462.7,1487.1 1454.6,1487.0 1446.5,1486.8 1438.5,1486.6 1430.4,1486.4 1422.3,1486.1 1414.2,1485.8 1406.1,1485.4 1398.0,1485.0 1389.9,1484.5 1381.8,1484.0 1373.7,1483.5 1365.7,1483.0 1357.6,1482.5 1349.5,1482.0 1341.4,1481.4 1333.3,1480.9 1325.2,1480.3 1317.1,1479.8 1309.0,1479.3 1300.9,1478.7 1292.9,1478.2 1284.8,1477.6 1276.7,1477.0 1268.6,1476.5 1260.5,1475.9 1252.4,1475.4 1244.3,1474.8 1236.2,1474.3 1228.2,1473.8 1220.1,1473.2 1212.0,1472.7 1203.9,1472.2 1195.8,1471.8 1187.7,1471.3 1179.6,1470.8 1171.5,1470.4 1163.4,1470.0 1155.4,1469.6 1147.3,1469.2 1139.2,1468.8 1131.1,1468.4 1123.0,1468.0" fill="#FFFFFF"/>
<polyline points="1123.0,1457.0 1131.1,1457.4 1139.2,1457.7 1147.3,1458.1 1155.4,1458.5 1163.4,1458.8 1171.5,1459.2 1179.6,1459.5 1187.7,1459.8 1195.8,1460.1 1203.9,1460.3 1212.0,1460.6 1220.1,1460.8 1228.2,1461.0 1236.2,1461.2 1244.3,1461.3 1252.4,1461.4 1260.5,1461.5 1268.6,1461.6 1276.7,1461.7 1284.8,1461.7 1292.9,1461.7 1300.9,1461.7 1309.0,1461.7 1317.1,1461.6 1325.2,1461.5 1333.3,1461.5 1341.4,1461.4 1349.5,1461.3 1357.6,1461.2 1365.7,1461.0 1373.7,1460.9 1381.8,1460.8 1389.9,1460.6 1398.0,1460.5 1406.1,1460.3 1414.2,1460.1 1422.3,1460.0 1430.4,1459.8 1438.5,1459.6 1446.5,1459.4 1454.6,1459.2 1462.7,1459.0 1470.8,1458.8 1478.9,1458.6 1487.0,1458.4 1495.1,1458.1 1503.2,1457.9 1511.3,1457.7 1519.3,1457.4 1527.4,1457.1 1535.5,1456.9 1543.6,1456.6 1551.7,1456.3 1559.8,1456.1 1567.9,1455.8 1576.0,1455.6 1584.1,1455.3 1592.1,1455.1 1600.2,1454.8 1608.3,1454.5 1616.4,1454.3 1624.5,1454.0 1632.6,1453.7 1640.7,1453.4 1648.8,1453.1 1656.8,1452.7 1664.9,1452.4 1673.0,1452.0 1681.1,1451.6 1689.2,1451.3 1697.3,1451.0 1705.4,1450.7 1713.5,1450.4 1721.6,1450.2 1729.6,1450.1 1737.7,1450.0 1745.8,1450.0 1753.9,1450.0 1762.0,1450.0" fill="none" stroke="#C89090" stroke-width="5" opacity="0.85"/>
<polyline points="1123.0,1457.0 1131.1,1457.4 1139.2,1457.7 1147.3,1458.1 1155.4,1458.5 1163.4,1458.8 1171.5,1459.2 1179.6,1459.5 1187.7,1459.8 1195.8,1460.1 1203.9,1460.3 1212.0,1460.6 1220.1,1460.8 1228.2,1461.0 1236.2,1461.2 1244.3,1461.3 1252.4,1461.4 1260.5,1461.5 1268.6,1461.6 1276.7,1461.7 1284.8,1461.7 1292.9,1461.7 1300.9,1461.7 1309.0,1461.7 1317.1,1461.6 1325.2,1461.5 1333.3,1461.5 1341.4,1461.4 1349.5,1461.3 1357.6,1461.2 1365.7,1461.0 1373.7,1460.9 1381.8,1460.8 1389.9,1460.6 1398.0,1460.5 1406.1,1460.3 1414.2,1460.1 1422.3,1460.0 1430.4,1459.8 1438.5,1459.6 1446.5,1459.4 1454.6,1459.2 1462.7,1459.0 1470.8,1458.8 1478.9,1458.6 1487.0,1458.4 1495.1,1458.1 1503.2,1457.9 1511.3,1457.7 1519.3,1457.4 1527.4,1457.1 1535.5,1456.9 1543.6,1456.6 1551.7,1456.3 1559.8,1456.1 1567.9,1455.8 1576.0,1455.6 1584.1,1455.3 1592.1,1455.1 1600.2,1454.8 1608.3,1454.5 1616.4,1454.3 1624.5,1454.0 1632.6,1453.7 1640.7,1453.4 1648.8,1453.1 1656.8,1452.7 1664.9,1452.4 1673.0,1452.0 1681.1,1451.6 1689.2,1451.3 1697.3,1451.0 1705.4,1450.7 1713.5,1450.4 1721.6,1450.2 1729.6,1450.1 1737.7,1450.0 1745.8,1450.0 1753.9,1450.0 1762.0,1450.0" fill="none" stroke="#A02020" stroke-width="1.6"/>
<line x1="1273" y1="1456" x2="1273" y2="1477" stroke="#C8C8C8" stroke-width="1.6" stroke-dasharray="5 3"/>
<line x1="1420.8" y1="1454" x2="1420.8" y2="1486" stroke="#C8C8C8" stroke-width="1.6" stroke-dasharray="5 3"/>
<line x1="1574" y1="1452" x2="1574" y2="1484" stroke="#C8C8C8" stroke-width="1.6" stroke-dasharray="5 3"/>
<polyline points="1123.0,1460.0 1131.1,1460.4 1139.2,1460.9 1147.3,1461.3 1155.4,1461.7 1163.4,1462.1 1171.5,1462.6 1179.6,1463.0 1187.7,1463.4 1195.8,1463.8 1203.9,1464.2 1212.0,1464.6 1220.1,1465.0 1228.2,1465.4 1236.2,1465.8 1244.3,1466.2 1252.4,1466.7 1260.5,1467.2 1268.6,1467.7 1276.7,1468.3 1284.8,1468.9 1292.9,1469.5 1300.9,1470.2 1309.0,1470.9 1317.1,1471.7 1325.2,1472.4 1333.3,1473.1 1341.4,1473.8 1349.5,1474.5 1357.6,1475.1 1365.7,1475.7 1373.7,1476.3 1381.8,1476.8 1389.9,1477.2 1398.0,1477.7 1406.1,1478.0 1414.2,1478.3 1422.3,1478.6 1430.4,1478.7 1438.5,1478.8 1446.5,1478.9 1454.6,1478.9 1462.7,1478.8 1470.8,1478.7 1478.9,1478.5 1487.0,1478.3 1495.1,1478.0 1503.2,1477.7 1511.3,1477.4 1519.3,1477.0 1527.4,1476.6 1535.5,1476.2 1543.6,1475.7 1551.7,1475.2 1559.8,1474.6 1567.9,1474.0 1576.0,1473.3 1584.1,1472.6 1592.1,1471.9 1600.2,1471.1 1608.3,1470.3 1616.4,1469.5 1624.5,1468.6 1632.6,1467.8 1640.7,1466.9 1648.8,1466.1 1656.8,1465.3 1664.9,1464.5 1673.0,1463.7 1681.1,1462.9 1689.2,1462.1 1697.3,1461.2 1705.4,1460.2 1713.5,1459.2 1721.6,1458.1 1729.6,1456.9 1737.7,1455.5 1745.8,1454.1 1753.9,1452.6 1762.0,1451.0" fill="none" stroke="#22E03A" stroke-width="2"/>
<polyline points="1123.0,1468.0 1131.1,1468.4 1139.2,1468.8 1147.3,1469.2 1155.4,1469.6 1163.4,1470.0 1171.5,1470.4 1179.6,1470.8 1187.7,1471.3 1195.8,1471.8 1203.9,1472.2 1212.0,1472.7 1220.1,1473.2 1228.2,1473.8 1236.2,1474.3 1244.3,1474.8 1252.4,1475.4 1260.5,1475.9 1268.6,1476.5 1276.7,1477.0 1284.8,1477.6 1292.9,1478.2 1300.9,1478.7 1309.0,1479.3 1317.1,1479.8 1325.2,1480.3 1333.3,1480.9 1341.4,1481.4 1349.5,1482.0 1357.6,1482.5 1365.7,1483.0 1373.7,1483.5 1381.8,1484.0 1389.9,1484.5 1398.0,1485.0 1406.1,1485.4 1414.2,1485.8 1422.3,1486.1 1430.4,1486.4 1438.5,1486.6 1446.5,1486.8 1454.6,1487.0 1462.7,1487.1 1470.8,1487.2 1478.9,1487.3 1487.0,1487.4 1495.1,1487.4 1503.2,1487.4 1511.3,1487.3 1519.3,1487.2 1527.4,1486.9 1535.5,1486.6 1543.6,1486.1 1551.7,1485.6 1559.8,1485.1 1567.9,1484.5 1576.0,1483.8 1584.1,1483.2 1592.1,1482.5 1600.2,1481.7 1608.3,1481.0 1616.4,1480.1 1624.5,1479.2 1632.6,1478.3 1640.7,1477.3 1648.8,1476.2 1656.8,1475.0 1664.9,1473.8 1673.0,1472.5 1681.1,1471.3 1689.2,1470.0 1697.3,1468.9 1705.4,1467.8 1713.5,1466.6 1721.6,1465.3 1729.6,1463.5 1737.7,1461.1 1745.8,1458.1 1753.9,1454.7 1762.0,1451.0" fill="none" stroke="#D02020" stroke-width="2.6"/>
<polyline points="1123.0,1455.5 1300.0,1453.0 1500.0,1450.5 1700.0,1449.3 1762.0,1450.0" fill="none" stroke="#111" stroke-width="2.4"/>
<g fill="#FFFFFF" stroke="#2A333C" stroke-width="1.45">
<circle cx="1119.5" cy="1455" r="4.8"/>
<circle cx="1119.5" cy="1461" r="4.8"/>
<circle cx="1119.5" cy="1466.5" r="4.8"/>
<circle cx="1119.5" cy="1475" r="4.8"/>
<circle cx="1147.5" cy="1454" r="4.8"/>
<circle cx="1243.8" cy="1461" r="4.8"/>
<circle cx="1273" cy="1468.8" r="4.8"/>
<circle cx="1276.2" cy="1476.8" r="4.8"/>
<circle cx="1420" cy="1486" r="4.8"/>
<circle cx="1574" cy="1483.8" r="4.8"/>
<circle cx="1562.5" cy="1456.2" r="4.8"/>
<circle cx="1735" cy="1449.5" r="4.8"/>
<circle cx="1735" cy="1456" r="4.8"/>
<circle cx="1735" cy="1462.5" r="4.8"/>
</g>
<circle cx="1762.5" cy="1452" r="6" fill="#111"/><circle cx="1762" cy="1450.5" r="4.6" fill="#fff" stroke="#111" stroke-width="1.6"/>
<circle cx="1463" cy="1478.5" r="4.6" fill="#FFF01E"/><circle cx="1525.8" cy="1486.8" r="4.6" fill="#FFD21E"/>
</svg>
<svg id="chrome" width="2880" height="1800" viewBox="0 0 2880 1800" style="position:absolute;left:0;top:0">
<rect x="0" y="0" width="2880" height="170" fill="#F8F8FC"/>
<rect x="0" y="38.5" width="2880" height="2" fill="#9A9A9A"/>
<rect x="0" y="104" width="2880" height="2" fill="#9A9A9A"/>
<rect x="0" y="170" width="2876" height="2" fill="#969294"/>
<g><path d="M9.5,3 Q8,14 10.5,18.5 Q13,22.5 16,22.5 Q19,22.5 21.5,18.5 Q24,14 22.5,3 Z" fill="#E8ECEE" stroke="#9AA0A4" stroke-width="1.2"/><path d="M9.2,11.5 Q9.5,16 11,18.5 Q13.2,22 16,22 Q18.8,22 21,18.5 Q22.5,16 22.8,11.5 Z" fill="#C41424"/><ellipse cx="14" cy="15" rx="2.2" ry="3" fill="#E85060" opacity="0.7"/><rect x="14.8" y="22" width="2.4" height="7.5" fill="#A8B0B4"/><ellipse cx="16" cy="30.5" rx="7.5" ry="2.4" fill="#C8CDD0" stroke="#8A9094" stroke-width="1"/></g>
<text x="44.3" y="29.5" font-family="'DejaVu Sans','Liberation Sans',sans-serif" font-size="20.5" fill="#222" textLength="36.5" lengthAdjust="spacingAndGlyphs">File</text>
<text x="104" y="29.5" font-family="'DejaVu Sans','Liberation Sans',sans-serif" font-size="20.5" fill="#222" textLength="58.5" lengthAdjust="spacingAndGlyphs">Board</text>
<text x="188.5" y="29.5" font-family="'DejaVu Sans','Liberation Sans',sans-serif" font-size="20.5" fill="#222" textLength="55.5" lengthAdjust="spacingAndGlyphs">Mode</text>
<text x="268.3" y="29.5" font-family="'DejaVu Sans','Liberation Sans',sans-serif" font-size="20.5" fill="#222" textLength="41" lengthAdjust="spacingAndGlyphs">Edit</text>
<text x="331.5" y="29.5" font-family="'DejaVu Sans','Liberation Sans',sans-serif" font-size="20.5" fill="#222" textLength="48.5" lengthAdjust="spacingAndGlyphs">View</text>
<text x="404.5" y="29.5" font-family="'DejaVu Sans','Liberation Sans',sans-serif" font-size="20.5" fill="#222" textLength="126.5" lengthAdjust="spacingAndGlyphs">Components</text>
<text x="555.5" y="29.5" font-family="'DejaVu Sans','Liberation Sans',sans-serif" font-size="20.5" fill="#222" textLength="75.5" lengthAdjust="spacingAndGlyphs">Display</text>
<text x="654.5" y="29.5" font-family="'DejaVu Sans','Liberation Sans',sans-serif" font-size="20.5" fill="#222" textLength="106" lengthAdjust="spacingAndGlyphs">Superpose</text>
<text x="783.3" y="29.5" font-family="'DejaVu Sans','Liberation Sans',sans-serif" font-size="20.5" fill="#222" textLength="94" lengthAdjust="spacingAndGlyphs">Windows</text>
<text x="898.5" y="29.5" font-family="'DejaVu Sans','Liberation Sans',sans-serif" font-size="20.5" fill="#222" textLength="11.5" lengthAdjust="spacingAndGlyphs">?</text>
<rect x="44.5" y="32.3" width="10" height="1.8" fill="#222"/>
<rect x="784" y="32.3" width="16" height="1.8" fill="#222"/>
<rect x="898.5" y="32.3" width="11" height="1.8" fill="#222"/>
<rect x="2793" y="4.5" width="25" height="25" fill="#4A4A4A"/>
<rect x="2793" y="4.5" width="23.5" height="23.5" fill="#FFFFFF"/>
<rect x="2794.5" y="6" width="22" height="22" fill="#8C8C8C"/>
<rect x="2794.5" y="6" width="20.5" height="20.5" fill="#F2F2F6"/>
<rect x="2822.5" y="4.5" width="25" height="25" fill="#4A4A4A"/>
<rect x="2822.5" y="4.5" width="23.5" height="23.5" fill="#FFFFFF"/>
<rect x="2824.0" y="6" width="22" height="22" fill="#8C8C8C"/>
<rect x="2824.0" y="6" width="20.5" height="20.5" fill="#F2F2F6"/>
<rect x="2852.5" y="4.5" width="25" height="25" fill="#4A4A4A"/>
<rect x="2852.5" y="4.5" width="23.5" height="23.5" fill="#FFFFFF"/>
<rect x="2854.0" y="6" width="22" height="22" fill="#8C8C8C"/>
<rect x="2854.0" y="6" width="20.5" height="20.5" fill="#F2F2F6"/>
<rect x="2798.2" y="21.9" width="9.8" height="2.3" fill="#111"/>
<g fill="none" stroke="#777" stroke-width="1.2"><rect x="2832" y="11" width="8.8" height="8"/><rect x="2826.8" y="17.2" width="10" height="7" fill="#F6F6FA"/></g><path d="M2831.5,11.2 H2841.6 M2826.3,17.5 H2837.4" stroke="#111" stroke-width="2.2" fill="none"/>
<path d="M2858.3,10.5 L2871.8,23.8 M2871.8,10.5 L2858.3,23.8" stroke="#111" stroke-width="1.9" fill="none"/>
<g><ellipse cx="32" cy="72.5" rx="10.5" ry="26" fill="#FBFBFD" stroke="#7A7A7A" stroke-width="1.6"/><path d="M32,55 L28,66 M32,55 L36,66 M26,62 L38,62" stroke="#F0A0A8" stroke-width="1.6" fill="none"/><path d="M31.5,92 L31.5,80 L27.5,76 L27.5,72.5 L31,75 L31,62 Q33,60 34.5,62 L34.5,71 L37,68.5 L39,70 L39,73 L41,71.5 L43,73 L43,77 L44.5,76.5 L45,79 L43.5,86 L43.5,92 Z" fill="#FFFFFF" stroke="#333" stroke-width="1.5" stroke-linejoin="round"/></g>
<g stroke-linejoin="round"><path d="M88,57 L104,60.5 Q110,63 110,68 L106,86 L95,82 Z" fill="#E9E3A0" stroke="#8C8C86" stroke-width="1.5"/><path d="M84,59 L101,63 Q107,65.5 107,70 L106,88 L92,83 Z" fill="#F3EDAE" stroke="#8C8C86" stroke-width="1.5"/><path d="M77,61 L80,60 L83.5,63 L97,67 Q102.5,69 103,74 L104.5,91 L84,83 Z" fill="#FAF4B4" stroke="#8A8A84" stroke-width="1.6"/><path d="M104.5,91 L110.5,86 L110.5,82" fill="none" stroke="#77776F" stroke-width="2.2"/></g>
<defs><linearGradient id="fire" x1="0" y1="0" x2="0" y2="1"><stop offset="0" stop-color="#E82A10"/><stop offset="0.45" stop-color="#FF9A18"/><stop offset="0.8" stop-color="#FFE9A0"/><stop offset="1" stop-color="#FFFFFF"/></linearGradient></defs><g stroke-linejoin="round"><path d="M144.5,54.5 L150,55.5 L168.5,65 L168.5,92 L163,88 L144.5,80.5 Z" fill="#5A5E62" stroke="#3C3F42" stroke-width="1.6"/><path d="M149,62 L165.5,69.5 L165.5,86.5 L149,79 Z" fill="url(#fire)"/><path d="M150.5,56 L166.5,63.5 L166.5,66 L150.5,58.5 Z" fill="#9BA0A4"/><path d="M168.5,92 L173.5,89.5 L168.5,84" fill="#3C3F42" stroke="#3C3F42" stroke-width="1.4"/></g>
<g><path d="M230,60.8 L266,60.8 M257,54.5 L257,75" stroke="#444" stroke-width="1.6" fill="none"/><path d="M264.6,56 L264.6,75" stroke="#444" stroke-width="1.6" stroke-dasharray="1.6 2.4" fill="none"/><rect x="232" y="78" width="35.5" height="15.5" fill="#9C9CA0"/><rect x="230" y="75.5" width="35" height="15" fill="#F6C61C"/><path d="M230,76.3 L265,76.3" stroke="#222" stroke-width="1.8" stroke-dasharray="1.8 1.8" fill="none"/><path d="M239,76 L239,80 M255,76 L255,80" stroke="#222" stroke-width="2" fill="none"/><path d="M237,83.5 h3.5 v4.5 M253,83.5 h4 v4.5 h-4 Z" stroke="#A07808" stroke-width="1.6" fill="none"/></g>
<rect x="331.9" y="43.8" width="146.6" height="58" rx="4" fill="#FFFFFF" stroke="#4F68E6" stroke-width="2"/>
<rect x="491.4" y="43.8" width="147.2" height="58" rx="4" fill="#ECEFFB" stroke="#B3BEF2" stroke-width="2"/>
<rect x="651.5" y="43.8" width="147" height="58" rx="4" fill="#ECEFFB" stroke="#B3BEF2" stroke-width="2"/>
<rect x="811.3" y="43.8" width="147.2" height="58" rx="4" fill="#ECEFFB" stroke="#B3BEF2" stroke-width="2"/>
<path d="M347,56.5 L363,89" stroke="#111" stroke-width="2" fill="none"/>
<circle cx="347" cy="56.5" r="4.2" fill="#1438E0"/><circle cx="355" cy="72.5" r="7.2" fill="#F01810"/><circle cx="363" cy="88.8" r="4.6" fill="#10E040"/>
<text x="374" y="81" font-family="'Liberation Sans','DejaVu Sans',sans-serif" font-size="26" fill="#1C1C6C" textLength="83" lengthAdjust="spacingAndGlyphs">Design</text>
<defs><radialGradient id="sph" cx="0.38" cy="0.3" r="0.75"><stop offset="0" stop-color="#8FD2FF"/><stop offset="0.45" stop-color="#1E86FF"/><stop offset="1" stop-color="#0A2FD8"/></radialGradient></defs>
<circle cx="515.8" cy="72.8" r="16.6" fill="url(#sph)"/>
<text x="536" y="81" font-family="'Liberation Sans','DejaVu Sans',sans-serif" font-size="26" fill="#1C1C6C" textLength="95" lengthAdjust="spacingAndGlyphs">3D view</text>
<g fill="none" stroke="#333" stroke-width="1.6"><path d="M665,54.5 L689,54.5 L697.5,63 L697.5,91 L665,91 Z" fill="#FFFFFF"/><path d="M689,54.5 L689,63 L697.5,63" stroke="#3A8FD0"/><path d="M668,62 L680,62 Q692,66 694,70 Q692,76 680,80 L668,80" stroke="#888" stroke-dasharray="2 1.6" stroke-width="1.4"/><path d="M669,71 L690,71" stroke="#999" stroke-dasharray="2 2" stroke-width="1.2"/><path d="M673,86 l5,0 m4,0 l5,0" stroke="#555" stroke-width="2"/></g>
<text x="710.5" y="81" font-family="'Liberation Sans','DejaVu Sans',sans-serif" font-size="26" fill="#1C1C6C" textLength="52.5" lengthAdjust="spacingAndGlyphs">Plan</text>
<defs><pattern id="dots" width="3" height="3" patternUnits="userSpaceOnUse"><rect width="3" height="3" fill="#fff"/><rect width="1.5" height="1.5" fill="#1C1C6C"/></pattern></defs>
<g stroke="#1C1C6C" stroke-width="2"><rect x="836.5" y="53.5" width="9" height="12" fill="#fff"/><path d="M827,65.5 L855.5,65.5 L855.5,80 Q855.5,91 841.2,91 Q827,91 827,80 Z" fill="url(#dots)"/></g>
<text x="868" y="81" font-family="'Liberation Sans','DejaVu Sans',sans-serif" font-size="26" fill="#1C1C6C" textLength="58" lengthAdjust="spacingAndGlyphs">CNC</text>
<rect x="1011.3" y="43.8" width="59.2" height="58" rx="4" fill="#FFFFFF" stroke="#4F68E6" stroke-width="2"/>
<text x="1024.3" y="81" font-family="'Liberation Sans','DejaVu Sans',sans-serif" font-size="26" fill="#1C1C6C" textLength="34.5" lengthAdjust="spacingAndGlyphs" font-weight="bold">cm</text>
<text x="1081" y="81" font-family="'Liberation Sans','DejaVu Sans',sans-serif" font-size="26" fill="#1C1C6C" textLength="44.5" lengthAdjust="spacingAndGlyphs">mm</text>
<text x="1141" y="81" font-family="'Liberation Sans','DejaVu Sans',sans-serif" font-size="26" fill="#1C1C6C" textLength="50" lengthAdjust="spacingAndGlyphs">inch</text>
<text x="1209.5" y="81" font-family="'Liberation Sans','DejaVu Sans',sans-serif" font-size="26" fill="#1C1C6C" textLength="38" lengthAdjust="spacingAndGlyphs">in/f</text>
<rect x="0" y="108" width="61.8" height="62" rx="2.5" fill="#999"/><rect x="2" y="110" width="57.8" height="58" rx="2" fill="#FFFFFF"/>
<rect x="607.8" y="109.3" width="58.4" height="59.1" rx="4" fill="#FFFFFF" stroke="#4F68E6" stroke-width="2"/>
<rect x="1415.4" y="109.2" width="59.2" height="59.2" rx="4" fill="#FFFFFF" stroke="#4F68E6" stroke-width="2"/>
<rect x="1555.2" y="109.2" width="59" height="59.2" rx="4" fill="#FFFFFF" stroke="#4F68E6" stroke-width="2"/>
<rect x="16.3" y="120.4" width="7.2" height="7" fill="#56707C"/><polygon points="23.4,127.3 23.4,148.1 27.6,145.5 32.0,153.3 39.4,153.3 39.4,140.9" fill="#56707C"/><rect x="75.1" y="117.2" width="23.8" height="23.5" fill="#FFFFFF" stroke="#8E8E94" stroke-width="2"/><rect x="78.6" y="122.2" width="6.8" height="6.8" fill="#4F6A6C"/><rect x="88.4" y="126.3" width="7" height="7" fill="#4F6A6C"/><polygon points="95.6,133.6 95.6,154.4 99.8,151.8 104.2,159.6 111.6,159.6 111.6,147.2" fill="#56707C"/><circle cx="151.9" cy="132.8" r="10.6" fill="none" stroke="#56707C" stroke-width="3.6"/><path d="M159,141 L169.5,154.5" stroke="#56707C" stroke-width="6.4" fill="none"/><rect x="193" y="117" width="23.6" height="17.6" fill="none" stroke="#66777F" stroke-width="2"/><circle cx="218.2" cy="137.2" r="9.6" fill="none" stroke="#56707C" stroke-width="3.4"/><path d="M224.5,145 L234,158" stroke="#56707C" stroke-width="6" fill="none"/><g fill="none" stroke="#555" stroke-width="1.7" stroke-linecap="round" stroke-linejoin="round"><path d="M257.5,153.5 L265,132 Q268,125.8 273,124.5 Q284,119.6 297,124.4 L285.8,141.3 L298.8,146.5 L271,161.2" fill="#FDFDFF"/><path d="M272.5,131 L276.5,124.5" stroke="#444" stroke-width="1.8"/><path d="M278.5,131.5 L283.5,123.5" stroke="#333" stroke-width="2.4"/><path d="M284.5,133 L292.5,123.5" stroke="#1E1E1E" stroke-width="3.8"/><path d="M286,141.5 L298.5,146.8 L272,160.8" stroke="#333" stroke-width="2.2"/></g><g stroke-linejoin="round"><path d="M353,119.5 L370,116.5 L379,121.5 L379,147 L362,150 Z" fill="#FFFFFF" stroke="#8A8A8A" stroke-width="1.5"/><path d="M335,130 L358,123 L367,129 L374,153 L347,163 Z" fill="#FFFFFF" stroke="#333" stroke-width="2"/><path d="M334.5,130 L346.5,163" stroke="#222" stroke-width="3.4"/><path d="M358,123 L360.5,131 L367,129" fill="none" stroke="#333" stroke-width="1.6"/><circle cx="356" cy="142" r="7.2" fill="none" stroke="#555" stroke-width="1.7"/></g><g stroke-linejoin="round" opacity="0.55"><path d="M400,129 L426,118 L443,148 L412,163 Z" fill="#FFFFFF" stroke="#AAB0B2" stroke-width="2"/><path d="M409,121 L414,117 L420,119.5 L423,117.5" fill="none" stroke="#AAB0B2" stroke-width="2"/><circle cx="419.5" cy="138.5" r="7.2" fill="none" stroke="#AAB0B2" stroke-width="1.7"/></g><path d="M488.5,138 Q492,129.3 500,129.3 Q509.6,129.3 509.6,141 L509.6,153.8" fill="none" stroke="#56707C" stroke-width="6"/><polygon points="480.2,129.9 480.2,145.8 495.8,145.8" fill="#56707C"/><path d="M567.3,138 Q563.8,129.3 555.8,129.3 Q546.2,129.3 546.2,141 L546.2,153.8" fill="none" stroke="#DEDEE3" stroke-width="6"/><polygon points="575.6,129.9 575.6,145.8 560,145.8" fill="#DEDEE3"/><path d="M610.8,139 Q611,131.5 625,129.3 Q640,127.6 652,131.2 Q662,134.8 663.6,139 Q662,143.2 652,146.8 Q640,150.4 625,148.7 Q611,146.5 610.8,139 Z" fill="#3B484E"/><path d="M673.5,134 Q700,141 726,130.5 Q718,141.5 700,144 Q684,145 673.5,134 Z" fill="#5E727B"/><path d="M735,141.5 Q745,133 760,133 Q776,133 786,141.5 Z" fill="#5E727B"/><path d="M761,121 L761,129.5 M756.5,124.5 L765.5,124.5 M757.5,122 L761,126 L764.5,122" stroke="#F01818" stroke-width="2.4" fill="none"/><path d="M761,145 L761,154 M756.5,150 L765.5,150 M757.5,152.5 L761,148.5 L764.5,152.5" stroke="#F01818" stroke-width="2.4" fill="none"/><path d="M800.5,141 Q800,133 812,129.5 Q822,124.5 833,127.5 Q846,131.5 846,140 Q846,145.5 838,145.5 L806,145.5 Q800.5,145.5 800.5,141 Z" fill="#5E727B"/><g fill="none"><ellipse cx="884.2" cy="139" rx="26.5" ry="11" stroke="#66757C" stroke-width="1.8"/><path d="M859,135 L909,135 M858,139 L910,139 M859,143 L909,143" stroke="#66757C" stroke-width="1.6"/><path d="M870.5,130 L870.5,148 M884.2,128 L884.2,150 M898,130 L898,148" stroke="#E82020" stroke-width="2"/></g><g opacity="0.8"><path d="M936,136 Q960,141 990,132 Q978,143 956,143 Q942,142 936,136 Z" fill="#CDD1D3"/><path d="M942.5,136 L942.5,123 M937,127 L942.5,119.5 L948,127" stroke="#D4D8DA" stroke-width="4" fill="none"/><path d="M986.5,137 L986.5,149 M981,146 L986.5,153 L992,146" stroke="#D4D8DA" stroke-width="4" fill="none"/></g><g fill="none" stroke="#63696D" stroke-width="2.2"><rect x="1025.3" y="123.3" width="29.6" height="29.2"/><path d="M1035.2,123.3 V152.5 M1045,123.3 V152.5 M1025.3,133 H1054.9 M1025.3,142.8 H1054.9"/></g><g fill="none" stroke="#63696D" stroke-width="2"><rect x="1083" y="121.5" width="24" height="11"/><rect x="1111" y="121.5" width="10" height="11"/><path d="M1088,125.5 h5 m3,0 h6 M1088,129 h5 m3,0 h6 M1114.5,125.5 h3 M1115.5,129 h1.5" stroke-width="1.6"/><path d="M1083,136.5 Q1084,141 1090,141 M1121,136.5 Q1120,141 1114,141" stroke-dasharray="2 1.6" stroke-width="1.6"/><path d="M1087,146.5 Q1090,144 1096,144 L1112,144 Q1120,144 1121,146.5 M1083,146 Q1086,154.5 1096,154.5 L1110,154.5 Q1119,154.5 1121.5,149"/></g><g fill="none" stroke="#5A6166"><path d="M1148.5,156.5 L1181.5,122.5" stroke-width="2.6"/><circle cx="1162.7" cy="141.1" r="2.8" stroke-width="2"/><path d="M1162.7,122 V152 M1152,141.1 H1182" stroke-width="1.6" stroke-dasharray="1.6 2.4"/><path d="M1146.5,126 l5,5 m0,-5 l-5,5 M1170.5,152.5 l5,5 m0,-5 l-5,5" stroke-width="1.6"/></g><g fill="none" stroke="#E2E4EA"><path d="M1225.2,114 V166" stroke-width="1.8"/><path d="M1206,141 H1246 M1218,125.5 H1236 M1212,156 H1234" stroke-width="1.6" stroke-dasharray="2 2.4"/><rect x="1222.5" y="138.5" width="5.5" height="5.5" fill="#E2E4EA" stroke="none"/></g><path d="M1264,134.5 Q1290,136.5 1311,132 L1314,135 Q1296,144.5 1280,144 Q1268,142 1264,134.5 Z" fill="#9AA2A6"/><path d="M1258.2,138.6 H1319.5" stroke="#0A0A0A" stroke-width="2.6"/><path d="M1312,135 h7 M1312,143 h7" stroke="#333" stroke-width="1.6" stroke-dasharray="2.4 1.6"/><path d="M1343.5,121.5 Q1351,118.5 1359,121 Q1377,128.5 1391.5,156 L1391.5,161.5 L1385.5,161.5 L1385.5,157.5 L1365.5,157.5 L1365.5,161.5 L1359.5,161.5 L1359.5,157.5 L1355.5,157.5 Q1360,139 1343.5,121.5 Z" fill="#58696F"/><path d="M1351,123 Q1364,136 1364,154" stroke="#7C8B91" stroke-width="1.6" fill="none" opacity="0.7"/><g fill="none" stroke="#1A1A1A"><path d="M1437,122 Q1427,127.5 1427.5,134 Q1439,141 1437,148 Q1434,153.5 1426.5,155" stroke-width="3.2" stroke-dasharray="5 3.4"/><path d="M1445,116 V162" stroke-width="1.6" stroke-dasharray="4.4 2.2"/><path d="M1466.5,121.5 Q1453.5,128 1453.5,134.5 Q1467,142 1466,148.5 Q1462,154.5 1452,156" stroke-width="3.4"/></g><rect x="1506" y="122.3" width="14.2" height="13.8" fill="#F2281A"/><rect x="1524" y="122.3" width="14.2" height="13.8" fill="#F8C822"/><rect x="1506" y="140" width="14.2" height="13.8" fill="#98C232"/><rect x="1524" y="140" width="14.2" height="13.8" fill="#72D2D2"/><rect x="1568" y="122.3" width="34" height="33.5" fill="#3A454B"/><rect x="1570.6" y="128.5" width="28.8" height="25" fill="#FFFFFF"/><rect x="1570.6" y="149.5" width="28.8" height="4" fill="#B9C4E8"/><path d="M1574,132.8 H1596 M1585,132.8 V136 M1576,141 H1596 M1576,147.3 H1594" stroke="#3A454B" stroke-width="2" fill="none"/><g fill="none" stroke="#444" stroke-width="1.8"><rect x="1829" y="126" width="24.5" height="25.5" stroke="#C9CDD2" stroke-width="1.4" stroke-dasharray="2 2"/><path d="M1841.2,128 V150 M1830.5,139 H1852"/><path d="M1837.7,132 L1841.2,128 L1844.7,132 M1837.7,146 L1841.2,150 L1844.7,146 M1834.5,135.5 L1830.5,139 L1834.5,142.5 M1848,135.5 L1852,139 L1848,142.5"/></g>
<text x="1662.5" y="145.4" font-family="'Liberation Sans','DejaVu Sans',sans-serif" font-size="23.5" fill="#1a1a1a" textLength="148.5" lengthAdjust="spacingAndGlyphs">Keyboard steps</text>
<rect x="1880.5" y="121" width="99" height="38.5" fill="#111"/><rect x="1882.5" y="123" width="95" height="34.5" fill="#FFFFFF"/>
<text x="1906.5" y="145.4" font-family="'DejaVu Sans','Liberation Sans',sans-serif" font-size="20" fill="#555" textLength="48" lengthAdjust="spacingAndGlyphs">Auto</text>
<rect x="0" y="1760" width="2880" height="40" fill="#F8F8FC"/>
<rect x="2876" y="170" width="4" height="1600" fill="#F8F8FC"/>
<text x="6.5" y="1794" font-family="'DejaVu Sans','Liberation Sans',sans-serif" font-size="20.5" fill="#2a2a2a" textLength="1081" lengthAdjust="spacingAndGlyphs">Use the arrow keys with Ctrl to move the point, Tab to go to the next point, shift Tab to the previous point.</text>
<path d="M2177.7,1800 L2177.7,1770 L2225.7,1770" fill="none" stroke="#9A9A9A" stroke-width="2"/>
<path d="M2233.8,1800 L2233.8,1770 L2371.7,1770" fill="none" stroke="#9A9A9A" stroke-width="2"/>
<path d="M2379.8,1800 L2379.8,1770 L2517.4,1770" fill="none" stroke="#9A9A9A" stroke-width="2"/>
<path d="M2525.8,1800 L2525.8,1770 L2663.4,1770" fill="none" stroke="#9A9A9A" stroke-width="2"/>
<path d="M2671.5,1800 L2671.5,1770 L2722,1770" fill="none" stroke="#9A9A9A" stroke-width="2"/>
<path d="M2730,1800 L2730,1770 L2787.5,1770" fill="none" stroke="#9A9A9A" stroke-width="2"/>
<path d="M2795.6,1800 L2795.6,1770 L2841,1770" fill="none" stroke="#9A9A9A" stroke-width="2"/>
<text x="2184.5" y="1793.2" font-family="'DejaVu Sans','Liberation Sans',sans-serif" font-size="20.5" fill="#333" textLength="29" lengthAdjust="spacingAndGlyphs">cm</text>
<text x="2239.5" y="1793.2" font-family="'DejaVu Sans','Liberation Sans',sans-serif" font-size="20.5" fill="#333" textLength="62.5" lengthAdjust="spacingAndGlyphs">X: -0.2</text>
<text x="2387.5" y="1793.2" font-family="'DejaVu Sans','Liberation Sans',sans-serif" font-size="20.5" fill="#333" textLength="67.5" lengthAdjust="spacingAndGlyphs">Y: 20.9</text>
<text x="2533" y="1793.2" font-family="'DejaVu Sans','Liberation Sans',sans-serif" font-size="20.5" fill="#333" textLength="56" lengthAdjust="spacingAndGlyphs">Z: 0.0</text>
<path d="M2858,1800 L2880,1778 M2864,1800 L2880,1784 M2870,1800 L2880,1790" stroke="#8A8A8A" stroke-width="2.2" fill="none"/>
</svg>
<div id="msclip"><div id="ms">
<div class="win" style="left:2476px;top:760px;width:400.5px;height:990px"></div>
<div class="tbar" style="left:2476px;top:760px;width:400.5px;height:30.5px"></div>
<div class="dot" style="left:2488px;top:764.2px"></div>
<div class="dot" style="left:2524px;top:764.2px"></div>
<div class="dot" style="left:2560px;top:764.2px"></div>
<div class="lab" style="left:2608.0px;top:761.4px;color:#707070;font-size:20.4px;letter-spacing:0;">Master Scale</div>
<div class="lab" style="left:2558.0px;top:801.9px;letter-spacing:-0.42px;">EBB 6'4.8" 27,9"87litres</div>
<div class="fld" style="left:2494.4px;top:840.6px;width:116.9px;height:33.0px;line-height:28.0px;">195.0</div>
<div class="fld" style="left:2614.5px;top:840.6px;width:117.1px;height:33.0px;line-height:28.0px;">70.8</div>
<div class="fld" style="left:2734.6px;top:840.6px;width:117.3px;height:33.0px;line-height:28.0px;">10.9</div>
<div class="lab" style="left:2506.0px;top:880.0px;">Zero Pt.</div>
<div class="lab" style="left:2630.0px;top:880.0px;">Max</div>
<div class="lab" style="left:2746.0px;top:880.0px;letter-spacing:0;">Max Thck.</div>
<div class="fld" style="left:2494.4px;top:911.0px;width:116.9px;height:32.5px;line-height:28.0px;">@102.4</div>
<div class="fld" style="left:2614.5px;top:911.0px;width:117.1px;height:32.5px;line-height:28.0px;">@102.0</div>
<div class="fld" style="left:2734.6px;top:911.0px;width:117.3px;height:32.5px;line-height:28.0px;">@107.9</div>
<div class="fld" style="left:2494.4px;top:958.3px;width:237.2px;height:32.9px;line-height:28.0px;letter-spacing:0;padding-left:6px;">Volume&nbsp; 86.8 L</div>
<div class="btn" style="left:2752.4px;top:955.3px;width:104.6px;height:37.3px;line-height:31.1px;letter-spacing:0.5px;">Resize</div>
<div class="grp" style="left:2486.2px;top:1011.2px;width:379.8px;height:543.3px"></div>
<div class="gtt" style="left:2498.5px;top:1003.2px;width:65.0px;height:18px"></div>
<div class="lab" style="left:2502.5px;top:999.7px;letter-spacing:1.1px;">Table</div>
<div class="grp" style="left:2486.2px;top:1566.9px;width:379.8px;height:79.6px"></div>
<div class="gtt" style="left:2498.0px;top:1558.9px;width:226.0px;height:18px"></div>
<div class="lab" style="left:2502.0px;top:1554.9px;letter-spacing:0.5px;">Measurements along</div>
<div class="grp" style="left:2486.2px;top:1659.2px;width:379.8px;height:79.2px"></div>
<div class="gtt" style="left:2498.5px;top:1651.2px;width:103.0px;height:18px"></div>
<div class="lab" style="left:2502.5px;top:1646.9px;letter-spacing:0.28px;">Structure</div>
<div class="btn" style="left:2752.4px;top:997.0px;width:104.6px;height:33.3px;line-height:27.1px;">&lt;&lt; Less</div>
<div class="btn" style="left:2536.4px;top:1033.0px;width:105.0px;height:33.3px;line-height:27.1px;letter-spacing:0.6px;">Width</div>
<div class="btn" style="left:2644.3px;top:1033.0px;width:104.7px;height:33.3px;line-height:27.1px;letter-spacing:0.1px;">Thic. Str</div>
<div class="btn" style="left:2752.4px;top:1033.0px;width:104.6px;height:33.3px;line-height:27.1px;letter-spacing:-0.2px;">Rock. Str</div>
<div class="lab" style="left:2493.0px;top:1034.5px;width:42.5px;overflow:hidden;letter-spacing:0.7px;">/tail</div>
<div class="rl" style="left:2492px;top:1070.9px;width:40px;height:32px;line-height:32px">0</div>
<div class="fld" style="left:2536.4px;top:1068.9px;width:103.6px;height:32.2px;line-height:28.0px;">41.8</div>
<div class="fld" style="left:2644.3px;top:1068.9px;width:103.7px;height:32.2px;line-height:28.0px;">-2.5</div>
<div class="fld" style="left:2752.4px;top:1068.9px;width:103.6px;height:32.2px;line-height:28.0px;">6.4</div>
<div class="rl" style="left:2492px;top:1106.8px;width:40px;height:32px;line-height:32px">5</div>
<div class="fld" style="left:2536.4px;top:1104.8px;width:103.6px;height:32.2px;line-height:28.0px;">43.8</div>
<div class="fld" style="left:2644.3px;top:1104.8px;width:103.7px;height:32.2px;line-height:28.0px;">1.5</div>
<div class="fld" style="left:2752.4px;top:1104.8px;width:103.6px;height:32.2px;line-height:28.0px;">5.9</div>
<div class="rl" style="left:2492px;top:1142.7px;width:40px;height:32px;line-height:32px">10</div>
<div class="fld" style="left:2536.4px;top:1140.7px;width:103.6px;height:32.2px;line-height:28.0px;">45.8</div>
<div class="fld" style="left:2644.3px;top:1140.7px;width:103.7px;height:32.2px;line-height:28.0px;">4.5</div>
<div class="fld" style="left:2752.4px;top:1140.7px;width:103.6px;height:32.2px;line-height:28.0px;">5.3</div>
<div class="rl" style="left:2492px;top:1178.6px;width:40px;height:32px;line-height:32px">20</div>
<div class="fld" style="left:2536.4px;top:1176.6px;width:103.6px;height:32.2px;line-height:28.0px;">49.8</div>
<div class="fld" style="left:2644.3px;top:1176.6px;width:103.7px;height:32.2px;line-height:28.0px;">5.6</div>
<div class="fld" style="left:2752.4px;top:1176.6px;width:103.6px;height:32.2px;line-height:28.0px;">4.3</div>
<div class="rl" style="left:2493.5px;top:1214.5px;width:38.5px;height:32px;line-height:32px;text-align:left;letter-spacing:-0.4px">30.5</div>
<div class="fld" style="left:2536.4px;top:1212.5px;width:103.6px;height:32.2px;line-height:28.0px;">53.9</div>
<div class="fld" style="left:2644.3px;top:1212.5px;width:103.7px;height:32.2px;line-height:28.0px;">6.7</div>
<div class="fld" style="left:2752.4px;top:1212.5px;width:103.6px;height:32.2px;line-height:28.0px;">3.4</div>
<div class="rl" style="left:2492px;top:1250.4px;width:40px;height:32px;line-height:32px">50</div>
<div class="fld" style="left:2536.4px;top:1248.4px;width:103.6px;height:32.2px;line-height:28.0px;">63.7</div>
<div class="fld" style="left:2644.3px;top:1248.4px;width:103.7px;height:32.2px;line-height:28.0px;">8.5</div>
<div class="fld" style="left:2752.4px;top:1248.4px;width:103.6px;height:32.2px;line-height:28.0px;">1.9</div>
<div class="lab" style="left:2491.5px;top:1287.9px;">/nose</div>
<div class="rl" style="left:2492px;top:1322.2px;width:40px;height:32px;line-height:32px">50</div>
<div class="fld" style="left:2536.4px;top:1320.2px;width:103.6px;height:32.2px;line-height:28.0px;">64.0</div>
<div class="fld" style="left:2644.3px;top:1320.2px;width:103.7px;height:32.2px;line-height:28.0px;">9.7</div>
<div class="fld" style="left:2752.4px;top:1320.2px;width:103.6px;height:32.2px;line-height:28.0px;">1.6</div>
<div class="rl" style="left:2493.5px;top:1358.1px;width:38.5px;height:32px;line-height:32px;text-align:left;letter-spacing:-0.4px">30.5</div>
<div class="fld" style="left:2536.4px;top:1356.1px;width:103.6px;height:32.2px;line-height:28.0px;">57.0</div>
<div class="fld" style="left:2644.3px;top:1356.1px;width:103.7px;height:32.2px;line-height:28.0px;">7.8</div>
<div class="fld" style="left:2752.4px;top:1356.1px;width:103.6px;height:32.2px;line-height:28.0px;">3.7</div>
<div class="rl" style="left:2492px;top:1394.0px;width:40px;height:32px;line-height:32px">20</div>
<div class="fld" style="left:2536.4px;top:1392.0px;width:103.6px;height:32.2px;line-height:28.0px;">52.0</div>
<div class="fld" style="left:2644.3px;top:1392.0px;width:103.7px;height:32.2px;line-height:28.0px;">6.1</div>
<div class="fld" style="left:2752.4px;top:1392.0px;width:103.6px;height:32.2px;line-height:28.0px;">5.4</div>
<div class="rl" style="left:2492px;top:1429.9px;width:40px;height:32px;line-height:32px">10</div>
<div class="fld" style="left:2536.4px;top:1427.9px;width:103.6px;height:32.2px;line-height:28.0px;">46.1</div>
<div class="fld" style="left:2644.3px;top:1427.9px;width:103.7px;height:32.2px;line-height:28.0px;">4.1</div>
<div class="fld" style="left:2752.4px;top:1427.9px;width:103.6px;height:32.2px;line-height:28.0px;">7.4</div>
<div class="rl" style="left:2492px;top:1465.8px;width:40px;height:32px;line-height:32px">5</div>
<div class="fld" style="left:2536.4px;top:1463.8px;width:103.6px;height:32.2px;line-height:28.0px;">34.6</div>
<div class="fld" style="left:2644.3px;top:1463.8px;width:103.7px;height:32.2px;line-height:28.0px;">2.7</div>
<div class="fld" style="left:2752.4px;top:1463.8px;width:103.6px;height:32.2px;line-height:28.0px;">8.8</div>
<div class="rl" style="left:2492px;top:1501.7px;width:40px;height:32px;line-height:32px">0</div>
<div class="fld" style="left:2536.4px;top:1499.7px;width:103.6px;height:32.2px;line-height:28.0px;">0.1</div>
<div class="fld" style="left:2644.3px;top:1499.7px;width:103.7px;height:32.2px;line-height:28.0px;">0.8</div>
<div class="fld" style="left:2752.4px;top:1499.7px;width:103.6px;height:32.2px;line-height:28.0px;">10.4</div>
<div class="btn" style="left:2752.4px;top:1543.0px;width:104.6px;height:33.8px;line-height:27.6px;">&lt;&lt; Btns</div>
<div class="btn" style="left:2498.5px;top:1589.0px;width:166.8px;height:44.2px;line-height:38.0px;letter-spacing:0.6px;">A straight line</div>
<div class="btn sel" style="left:2686.5px;top:1589.0px;width:166.5px;height:44.2px;line-height:38.0px;letter-spacing:0.28px;">The Stringer</div>
<div class="btn" style="left:2498.5px;top:1681.0px;width:166.8px;height:43.8px;line-height:37.6px;letter-spacing:0.2px;">New Slice</div>
<div class="btn" style="left:2686.5px;top:1681.0px;width:166.5px;height:43.8px;line-height:37.6px;letter-spacing:-0.1px;">New 3D Layer</div>
</div></div>
</body></html>
